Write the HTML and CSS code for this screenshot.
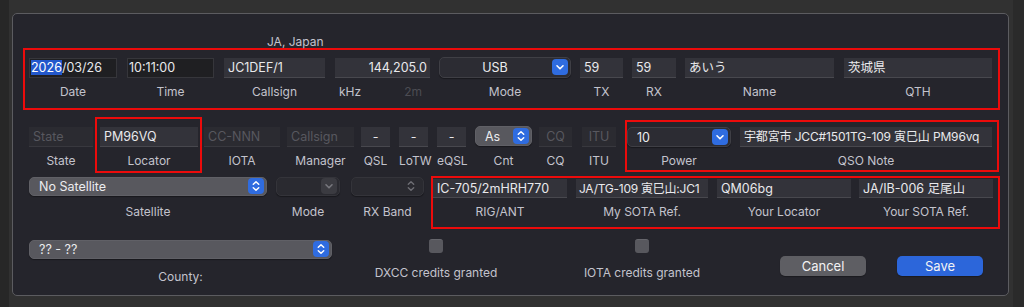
FILE: index.html
```html
<!DOCTYPE html>
<html lang="ja">
<head>
<meta charset="utf-8">
<title>QSO Edit</title>
<link rel="stylesheet" href="styles.css">
</head>
<body>
<div class="window">
  <div class="panel">
    <div class="country">JA, Japan</div>

    <div class="box box1">
      <div class="col c-date"><div class="field dark"><span class="sel">2026</span>/03/26</div><div class="lbl">Date</div></div>
      <div class="col c-time"><div class="field dark">10:11:00</div><div class="lbl">Time</div></div>
      <div class="col c-call"><div class="field">JC1DEF/1</div><div class="lbl">Callsign</div></div>
      <div class="col c-khz"><div class="field right">144,205.0</div><div class="lbl split"><span>kHz</span><span class="dim">2m</span></div></div>
      <div class="col c-mode"><div class="popup center">USB<svg class="btn" viewBox="0 0 16 16"><rect width="16" height="16" rx="4" fill="#2f6ce0"/><path d="M5 6.8 8 9.8 11 6.8" fill="none" stroke="#fff" stroke-width="1.6" stroke-linecap="round" stroke-linejoin="round"/></svg></div><div class="lbl">Mode</div></div>
      <div class="col c-tx"><div class="field">59</div><div class="lbl">TX</div></div>
      <div class="col c-rx"><div class="field">59</div><div class="lbl">RX</div></div>
      <div class="col c-name"><div class="field cjk">あいう</div><div class="lbl">Name</div></div>
      <div class="col c-qth"><div class="field cjk">茨城県</div><div class="lbl">QTH</div></div>
    </div>

    <div class="row row2">
      <div class="col c-state"><div class="field ph">State</div><div class="lbl">State</div></div>
      <div class="box box-loc">
        <div class="col c-loc"><div class="field">PM96VQ</div><div class="lbl">Locator</div></div>
      </div>
      <div class="col c-iota"><div class="field ph">CC-NNN</div><div class="lbl">IOTA</div></div>
      <div class="col c-mgr"><div class="field ph">Callsign</div><div class="lbl">Manager</div></div>
      <div class="col c-qsl"><div class="field center">-</div><div class="lbl">QSL</div></div>
      <div class="col c-lotw"><div class="field center">-</div><div class="lbl">LoTW</div></div>
      <div class="col c-eqsl"><div class="field center">-</div><div class="lbl">eQSL</div></div>
      <div class="col c-cnt"><div class="popup light">As<svg class="btn" viewBox="0 0 16 16"><rect width="16" height="16" rx="4" fill="#2f6ce0"/><path d="M5.3 6.3 8 3.8 10.7 6.3M5.3 9.7 8 12.2 10.7 9.7" fill="none" stroke="#fff" stroke-width="1.5" stroke-linecap="round" stroke-linejoin="round"/></svg></div><div class="lbl">Cnt</div></div>
      <div class="col c-cq"><div class="field ph center">CQ</div><div class="lbl">CQ</div></div>
      <div class="col c-itu"><div class="field ph center">ITU</div><div class="lbl">ITU</div></div>
      <div class="box box-pow">
        <div class="col c-pow"><div class="popup">10<svg class="btn" viewBox="0 0 16 16"><rect width="16" height="16" rx="4" fill="#2f6ce0"/><path d="M5 6.8 8 9.8 11 6.8" fill="none" stroke="#fff" stroke-width="1.6" stroke-linecap="round" stroke-linejoin="round"/></svg></div><div class="lbl">Power</div></div>
        <div class="col c-note"><div class="field cjk note">宇都宮市 JCC#1501TG-109 寅巳山 PM96vq</div><div class="lbl">QSO Note</div></div>
      </div>
    </div>

    <div class="row row3">
      <div class="col c-sat"><div class="popup light">No Satellite<svg class="btn" viewBox="0 0 16 16"><rect width="16" height="16" rx="4" fill="#2f6ce0"/><path d="M5.3 6.3 8 3.8 10.7 6.3M5.3 9.7 8 12.2 10.7 9.7" fill="none" stroke="#fff" stroke-width="1.5" stroke-linecap="round" stroke-linejoin="round"/></svg></div><div class="lbl">Satellite</div></div>
      <div class="col c-smode"><div class="popup disabled"><svg class="btn" viewBox="0 0 16 16"><rect width="16" height="16" rx="4" fill="#3b3b41"/><path d="M5 6.8 8 9.8 11 6.8" fill="none" stroke="#77777d" stroke-width="1.6" stroke-linecap="round" stroke-linejoin="round"/></svg></div><div class="lbl">Mode</div></div>
      <div class="col c-rxb"><div class="popup disabled"><svg class="btn bare" viewBox="0 0 16 16"><path d="M5.3 6.3 8 3.8 10.7 6.3M5.3 9.7 8 12.2 10.7 9.7" fill="none" stroke="#6e6e74" stroke-width="1.4" stroke-linecap="round" stroke-linejoin="round"/></svg></div><div class="lbl">RX Band</div></div>
      <div class="box box3">
        <div class="col c-rig"><div class="field">IC-705/2mHRH770</div><div class="lbl">RIG/ANT</div></div>
        <div class="col c-msota"><div class="field cjk">JA/TG-109 寅巳山:JC1</div><div class="lbl">My SOTA Ref.</div></div>
        <div class="col c-yloc"><div class="field">QM06bg</div><div class="lbl">Your Locator</div></div>
        <div class="col c-ysota"><div class="field cjk">JA/IB-006 足尾山</div><div class="lbl">Your SOTA Ref.</div></div>
      </div>
    </div>

    <div class="row row4">
      <div class="col c-county"><div class="popup light">?? - ??<svg class="btn" viewBox="0 0 16 16"><rect width="16" height="16" rx="4" fill="#2f6ce0"/><path d="M5.3 6.3 8 3.8 10.7 6.3M5.3 9.7 8 12.2 10.7 9.7" fill="none" stroke="#fff" stroke-width="1.5" stroke-linecap="round" stroke-linejoin="round"/></svg></div><div class="lbl county-lbl">County:</div></div>
      <div class="col c-chk c-dxcc"><div class="check"></div><div class="lbl chk-lbl">DXCC credits granted</div></div>
      <div class="col c-chk c-iotac"><div class="check"></div><div class="lbl chk-lbl">IOTA credits granted</div></div>
      <button class="button cancel">Cancel</button>
      <button class="button save">Save</button>
    </div>
  </div>
</div>
</body>
</html>
```

FILE: styles.css
```css
* { box-sizing: border-box; }
html, body { margin: 0; padding: 0; }
body {
  background: #2e2e2e;
  font-family: Inter, "Noto Sans", "Noto Sans CJK JP", sans-serif;
  -webkit-font-smoothing: antialiased;
}
.window {
  width: 1024px;
  height: 307px;
  padding: 13px 0 0 12px;
  overflow: hidden;
  background: linear-gradient(to right, #272727 0 9px, #313131 9px 1013px, #2a2a2a 1013px);
}
.panel {
  width: 997px;
  height: 283px;
  border: 1px solid #5c5c60;
  border-radius: 5px;
  background: #25252c;
}
.country {
  margin: 22px 0 0 254px;
  height: 12px;
  line-height: 12px;
  font-size: 12px;
  color: #c3c3cc;
}
.box { border: 2px solid #ec0b0b; }
.row { display: flex; align-items: flex-start; }
.col { display: flex; flex-direction: column; flex: none; }

.field {
  height: 20px;
  line-height: 20px;
  padding: 0 4px;
  font-size: 12.5px;
  color: #e9e9ec;
  background: #33333a;
  border-bottom: 1px solid #48484e;
  white-space: nowrap;
  overflow: hidden;
}
.field.cjk { font-family: Inter, "Noto Sans CJK JP", sans-serif; }
.field.note { font-size: 12px; letter-spacing: -0.15px; padding-left: 4px; }
.field.dark { background: #1f1f22; border: 1px solid #36363b; line-height: 18px; padding-left: 1px; }
.field.right { text-align: right; padding-right: 3px; }
.field.center { text-align: center; padding: 0; }
.field.ph { color: #58585f; background: #2b2b31; border-bottom-color: #38383e; }
.sel { background: #2358cc; color: #fff; }

.lbl {
  height: 16px;
  line-height: 16px;
  margin-top: 4px;
  font-size: 12px;
  color: #c3c3cc;
  text-align: center;
  white-space: nowrap;
}
.lbl.split { display: flex; justify-content: space-between; padding: 0 8px 0 4px; }
.lbl .dim { color: #4c4c53; }

.popup {
  position: relative;
  height: 20px;
  line-height: 20px;
  padding-left: 9px;
  font-size: 12.5px;
  color: #ececef;
  background: #2c2c33;
  border: 1px solid #3f3f45;
  border-radius: 5px;
  box-shadow: 0 1px 1px rgba(0,0,0,0.35);
  white-space: nowrap;
}
.popup.center { text-align: center; padding-left: 0; padding-right: 20px; }
.popup.light { background: #58585e; border-color: #606066; }
.popup.disabled { background: #2a2a30; border-color: #34343a; }
.btn {
  position: absolute;
  right: 2px;
  top: 1px;
  width: 16px;
  height: 16px;
}

/* Row 1 */
.box1 {
  display: flex;
  column-gap: 10px;
  margin-left: 10px;
  width: 977px;
  height: 62px;
  padding: 8px 0 0 4px;
}
.box1 .lbl { margin-top: 6px; }
.c-date { width: 88px; }
.c-time { width: 87px; }
.c-call { width: 101px; }
.c-khz { width: 95px; }
.c-mode { width: 132px; margin-left: -1px; }
.c-mode .popup { height: 21px; top: -1px; }
.box1 .c-mode .lbl { margin-top: 5px; }
.c-tx { width: 43px; margin-left: -1px; }
.c-rx { width: 44px; margin-left: -1px; }
.c-name { width: 149px; margin-left: -1px; }
.c-qth { width: 148px; }

/* Row 2 */
.row2 { margin: 7px 0 0 16px; }
.row2 > .col { margin-top: 10px; }
.row2 .lbl { margin-top: 6px; }
.c-state { width: 64px; }
.box-loc { margin-left: 2px; width: 107px; height: 56px; padding: 8px 0 0 3px; }
.c-loc { width: 98px; }
.c-iota { width: 76px; margin-left: 2px; }
.c-mgr { width: 67px; margin-left: 7px; }
.c-qsl { width: 29px; margin-left: 7px; }
.c-lotw { width: 29px; margin-left: 9px; }
.c-eqsl { width: 29px; margin-left: 9px; }
.c-cnt { width: 57px; margin-left: 9px; }
.row2 > .c-cnt { margin-top: 9px; }
.row2 .c-cnt .lbl { margin-top: 7px; }
.c-cq { width: 33px; margin-left: 7px; }
.c-itu { width: 34px; margin-left: 10px; }
.box-pow {
  display: flex;
  margin: 3px 0 0 9px;
  width: 374px;
  height: 52px;
  padding-top: 5px;
}
.c-pow { width: 104px; }
.c-note { width: 252px; margin-left: 9px; }

/* Row 3 */
.row3 { margin: 3px 0 0 16px; }
.row3 > .col { margin-top: 1px; }
.row3 .popup { height: 19px; line-height: 17px; }
.row3 .btn { top: 0; }
.row3 > .col .lbl { margin-top: 8px; }
.c-sat { width: 238px; }
.c-smode { width: 64px; margin-left: 9px; }
.c-rxb { width: 73px; margin-left: 11px; }
.btn.bare { right: 4px; }
.box3 {
  display: flex;
  margin-left: 7px;
  width: 569px;
  height: 53px;
  padding-top: 1px;
}
.box3 .field { height: 19px; line-height: 19px; }
.box3 .lbl { margin-top: 6px; }
.c-rig { width: 134px; }
.c-msota { width: 132px; margin-left: 9px; }
.c-msota .field { font-size: 12px; letter-spacing: -0.25px; padding: 0 2px 0 3px; }
.c-yloc { width: 134px; margin-left: 9px; }
.c-ysota { width: 134px; margin-left: 8px; }

/* Row 4 */
.row4 { margin-left: 16px; }
.c-county { width: 303px; margin-top: 11px; }
.c-county .popup { height: 19px; line-height: 17px; }
.c-county .btn { top: 0; }
.county-lbl { margin-top: 10px; }
.c-chk { width: 140px; align-items: center; margin-top: 10px; }
.c-dxcc { margin-left: 34px; }
.c-iotac { margin-left: 66px; }
.check {
  width: 14px;
  height: 14px;
  border-radius: 3px;
  background: #58585e;
  border-top: 1px solid #66666c;
}
.chk-lbl { margin-top: 12px; }
.button {
  flex: none;
  width: 86px;
  height: 20px;
  margin-top: 27px;
  padding: 0;
  border: none;
  border-radius: 5px;
  font-family: Inter, "Noto Sans", sans-serif;
  font-size: 13px;
  color: #f2f2f4;
  box-shadow: 0 1px 1px rgba(0,0,0,0.3);
}
.cancel { margin-left: 68px; background: #5e5e63; }
.save { margin-left: 31px; background: #2c66da; }
```
